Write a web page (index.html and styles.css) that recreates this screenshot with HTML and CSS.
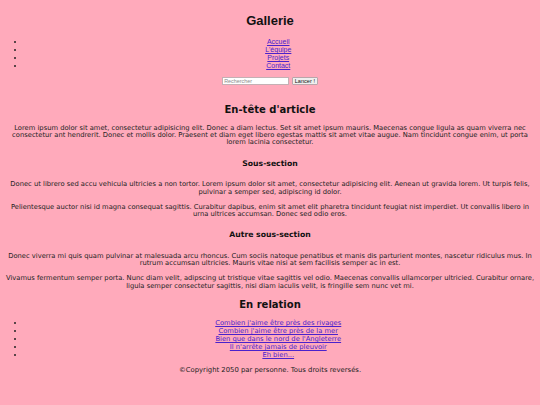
FILE: index.html
```html
<!DOCTYPE html>
<html lang="fr">
<head>
<meta charset="utf-8">
<title>Gallerie</title>
<link rel="stylesheet" href="styles.css">
</head>
<body>
<header class="site-header">
  <h1 class="site-title">Gallerie</h1>
</header>
<nav class="site-nav">
  <ul class="nav-list">
    <li><a href="#">Accueil</a></li>
    <li><a href="#">L'équipe</a></li>
    <li><a href="#">Projets</a></li>
    <li><a href="#">Contact</a></li>
  </ul>
  <form class="search-form">
    <input class="search-input" type="search" name="q" placeholder="Rechercher">
    <input class="search-button" type="submit" value="Lancer !">
  </form>
</nav>
<main class="content">
  <article class="article">
    <h2 class="section-title first">En-tête d'article</h2>
    <p class="text">Lorem ipsum dolor sit amet, consectetur adipisicing elit. Donec a diam lectus. Set sit amet ipsum mauris. Maecenas congue ligula as quam viverra nec consectetur ant hendrerit. Donec et mollis dolor. Praesent et diam eget libero egestas mattis sit amet vitae augue. Nam tincidunt congue enim, ut porta lorem lacinia consectetur.</p>
    <h3 class="sub-title">Sous-section</h3>
    <p class="text">Donec ut librero sed accu vehicula ultricies a non tortor. Lorem ipsum dolor sit amet, consectetur adipisicing elit. Aenean ut gravida lorem. Ut turpis felis, pulvinar a semper sed, adipiscing id dolor.</p>
    <p class="text">Pelientesque auctor nisi id magna consequat sagittis. Curabitur dapibus, enim sit amet elit pharetra tincidunt feugiat nist imperdiet. Ut convallis libero in urna ultrices accumsan. Donec sed odio eros.</p>
    <h3 class="sub-title">Autre sous-section</h3>
    <p class="text">Donec viverra mi quis quam pulvinar at malesuada arcu rhoncus. Cum sociis natoque penatibus et manis dis parturient montes, nascetur ridiculus mus. In rutrum accumsan ultricies. Mauris vitae nisi at sem facilisis semper ac in est.</p>
    <p class="text">Vivamus fermentum semper porta. Nunc diam velit, adipscing ut tristique vitae sagittis vel odio. Maecenas convallis ullamcorper ultricied. Curabitur ornare, ligula semper consectetur sagittis, nisi diam iaculis velit, is fringille sem nunc vet mi.</p>
  </article>
  <aside class="related">
    <h2 class="section-title">En relation</h2>
    <ul class="related-list">
      <li><a href="#">Combien j'aime être près des rivages</a></li>
      <li><a href="#">Combien j'aime être près de la mer</a></li>
      <li><a href="#">Bien que dans le nord de l'Angleterre</a></li>
      <li><a href="#">Il n'arrête jamais de pleuvoir</a></li>
      <li><a href="#">Eh bien...</a></li>
    </ul>
  </aside>
</main>
<footer class="site-footer">
  <p class="copyright">©Copyright 2050 par personne. Tous droits reversés.</p>
</footer>
</body>
</html>
```

FILE: styles.css
```css
html {
  background: #ffaabb;
}

body {
  margin: 0 3px;
  padding: 0.1px 0 0;
  background: #ffaabb;
  color: #222;
  text-align: center;
  font-family: "DejaVu Sans", Verdana, sans-serif;
  font-size: 6.75px;
}

a {
  color: #4a22cc;
}

.site-header {
  font-family: "Liberation Sans", Arial, sans-serif;
}

.site-title {
  margin: 13.1px 0 0;
  font-size: 13px;
  line-height: 15px;
  color: #111;
}

.site-nav {
  font-family: "Liberation Sans", Arial, sans-serif;
  font-size: 7px;
}

.nav-list,
.related-list {
  margin: 0 5px 0 0;
  padding-left: 21.5px;
}

.nav-list {
  margin-top: 10.1px;
}

.nav-list li {
  line-height: 8px;
}

.search-form {
  margin: 6.6px 0 0;
  display: flex;
  justify-content: center;
  gap: 2.7px;
}

.search-input {
  box-sizing: border-box;
  width: 67px;
  height: 8.4px;
  margin: 0;
  padding: 0 1px;
  border: 1px solid #c4b0b4;
  background: #fff;
  font-family: "Liberation Sans", Arial, sans-serif;
  font-size: 5.4px;
}

.search-input::placeholder {
  color: #8a8a8a;
}

.search-button {
  box-sizing: border-box;
  width: 26px;
  height: 8.6px;
  margin: 0;
  padding: 0;
  border: 1px solid #b9a6aa;
  border-radius: 1px;
  background: #efefef;
  color: #111;
  font-family: "Liberation Sans", Arial, sans-serif;
  font-size: 5.6px;
  line-height: 6.6px;
}

.section-title {
  margin: 9.2px 0 10.1px;
  font-size: 10px;
  line-height: 11px;
  color: #111;
}

.section-title.first {
  margin-top: 18.2px;
}

.sub-title {
  margin: 11.8px 0 13.8px;
  font-size: 7.7px;
  line-height: 9px;
  color: #111;
}

.text {
  margin: 7.7px 0;
  line-height: 7.35px;
}

.related .section-title {
  margin-bottom: 8.8px;
}

.related-list li {
  line-height: 8px;
}

.copyright {
  margin: 7.4px 0;
  font-size: 6.85px;
  line-height: 8px;
}
```
